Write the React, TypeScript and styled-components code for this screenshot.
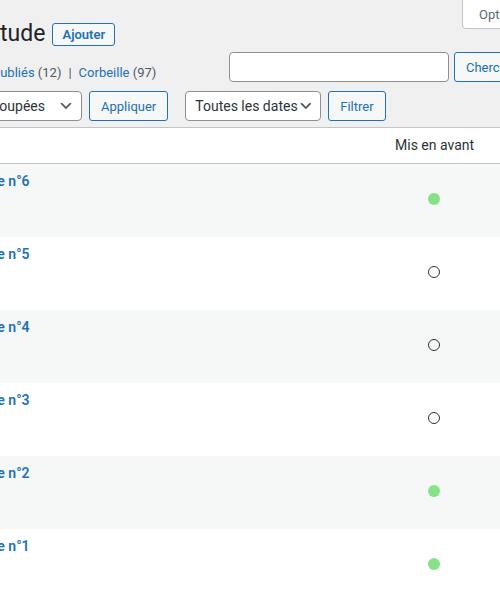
import styled, { createGlobalStyle } from 'styled-components';

const GlobalStyle = createGlobalStyle`
  html, body {
    margin: 0;
    padding: 0;
    background: #f0f0f1;
    overflow: hidden;
  }
  body {
    font-family: Roboto, "Liberation Sans", sans-serif;
    font-size: 13px;
    color: #3c434a;
  }
`;

const Page = styled.div`
  width: 500px;
  height: 600px;
  overflow: hidden;
`;

const TopRow = styled.div`
  display: grid;
  grid-template-columns: 462px auto;
  align-items: start;
`;

const TitleGroup = styled.div`
  display: flex;
  align-items: center;
  gap: 7px;
  padding-top: 19px;
  margin-left: -13px;
`;

const Title = styled.h1`
  margin: 0;
  font-size: 23px;
  font-weight: 400;
  line-height: 30px;
  color: #1d2327;
  white-space: nowrap;
`;

const Button = styled.button<{ $small?: boolean }>`
  flex-shrink: 0;
  height: ${(p) => (p.$small ? '23px' : '30px')};
  padding: 0 ${(p) => (p.$small ? '9px' : '11px')};
  border: 1px solid #2271b1;
  border-radius: 3px;
  background: #f6f7f7;
  color: #2271b1;
  font-family: inherit;
  font-size: 13px;
  font-weight: ${(p) => (p.$small ? 600 : 400)};
  white-space: nowrap;
  cursor: pointer;
`;

const ScreenTab = styled.div`
  width: 140px;
  height: 29px;
  box-sizing: border-box;
  padding: 0 16px;
  background: #fff;
  border: 1px solid #c3c4c7;
  border-top: 0;
  border-radius: 0 0 4px 4px;
  color: #646970;
  line-height: 29px;
  white-space: nowrap;
`;

const SubRow = styled.div`
  display: grid;
  grid-template-columns: 229px 220px auto;
  height: 30px;
  margin-top: 3px;
`;

const Views = styled.div`
  padding-top: 11px;
  margin-left: -8px;
  white-space: nowrap;
  line-height: 19px;
`;

const ViewLink = styled.a`
  color: #2271b1;
  text-decoration: none;
`;

const Count = styled.span`
  color: #50575e;
`;

const Sep = styled.span`
  color: #50575e;
  padding: 0 7px;
`;

const SearchInput = styled.input`
  height: 30px;
  box-sizing: border-box;
  border: 1px solid #8c8f94;
  border-radius: 4px;
  background: #fff;
  margin: 0;
`;

const SearchButton = styled(Button)`
  margin-left: 5px;
`;

const TableNav = styled.div`
  display: flex;
  align-items: center;
  margin-top: 9px;
  height: 30px;
`;

const Group = styled.div<{ $shift?: number }>`
  display: flex;
  gap: 7px;
  margin-left: ${(p) => p.$shift ?? 0}px;
  & + & {
    margin-left: 17px;
  }
`;

const Select = styled.div<{ $width: number }>`
  width: ${(p) => p.$width}px;
  height: 30px;
  box-sizing: border-box;
  display: flex;
  align-items: center;
  justify-content: space-between;
  padding: 0 7px 0 9px;
  background: #fff;
  border: 1px solid #8c8f94;
  border-radius: 4px;
  color: #2c3338;
  font-size: 14px;
  white-space: nowrap;
  flex-shrink: 0;
`;

const Table = styled.div`
  margin-top: 6px;
  margin-left: -42px;
  width: 626px;
  border: 1px solid #c3c4c7;
  background: #fff;
`;

const Row = styled.div<{ $striped?: boolean; $head?: boolean }>`
  display: grid;
  grid-template-columns: 426px 98px 100px;
  height: ${(p) => (p.$head ? '35px' : '73px')};
  background: ${(p) => (p.$striped ? '#f6f7f7' : '#fff')};
  border-bottom: ${(p) => (p.$head ? '1px solid #c3c4c7' : '0')};
`;

const HeadCell = styled.div<{ $center?: boolean }>`
  padding: 8px 10px;
  font-size: 14px;
  line-height: 19px;
  color: #2c3338;
  text-align: ${(p) => (p.$center ? 'center' : 'left')};
  white-space: nowrap;
`;

const TitleCell = styled.div`
  padding: 8px 10px;
  line-height: 19px;
`;

const RowTitle = styled.a`
  color: #2271b1;
  font-size: 14px;
  font-weight: 600;
  text-decoration: none;
  white-space: nowrap;
`;

const FeatureCell = styled.div`
  display: flex;
  justify-content: center;
  padding-top: 29px;
`;

const Dot = styled.span<{ $on: boolean }>`
  width: 12px;
  height: 12px;
  box-sizing: border-box;
  border-radius: 50%;
  background: ${(p) => (p.$on ? '#86e286' : 'transparent')};
  border: ${(p) => (p.$on ? '0' : '1.5px solid #2c3338')};
`;

const Chevron = () => (
  <svg width="16" height="16" viewBox="0 0 20 20" aria-hidden="true">
    <path d="M5 6l5 5 5-5 2 1-7 7-7-7 2-1z" fill="#50575e" />
  </svg>
);

const rows = [
  { n: 6, featured: true },
  { n: 5, featured: false },
  { n: 4, featured: false },
  { n: 3, featured: false },
  { n: 2, featured: true },
  { n: 1, featured: true },
];

const App = () => {
  return (
    <Page>
      <GlobalStyle />
      <TopRow>
        <TitleGroup>
          <Title>Étude</Title>
          <Button $small>Ajouter</Button>
        </TitleGroup>
        <ScreenTab>Options de l’écran</ScreenTab>
      </TopRow>

      <SubRow>
        <Views>
          <ViewLink href="#">Publiés</ViewLink> <Count>(12)</Count>
          <Sep>|</Sep>
          <ViewLink href="#">Corbeille</ViewLink> <Count>(97)</Count>
        </Views>
        <SearchInput type="search" />
        <SearchButton>Chercher des études</SearchButton>
      </SubRow>

      <TableNav>
        <Group $shift={-74}>
          <Select $width={156}>
            Actions groupées
            <Chevron />
          </Select>
          <Button>Appliquer</Button>
        </Group>
        <Group>
          <Select $width={136}>
            Toutes les dates
            <Chevron />
          </Select>
          <Button>Filtrer</Button>
        </Group>
      </TableNav>

      <Table>
        <Row $head>
          <HeadCell>Titre</HeadCell>
          <HeadCell $center>Mis en avant</HeadCell>
          <HeadCell />
        </Row>
        {rows.map((r, i) => (
          <Row key={r.n} $striped={i % 2 === 0}>
            <TitleCell>
              <RowTitle href="#">Étude n°{r.n}</RowTitle>
            </TitleCell>
            <FeatureCell>
              <Dot $on={r.featured} />
            </FeatureCell>
            <div />
          </Row>
        ))}
      </Table>
    </Page>
  );
};

export default App;
